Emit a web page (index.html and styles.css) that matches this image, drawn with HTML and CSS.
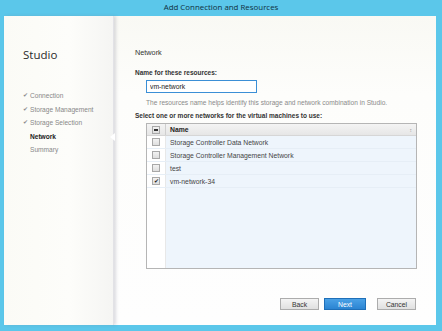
FILE: index.html
```html
<!DOCTYPE html>
<html lang="en">

<head>
    <meta charset="UTF-8">
    <title>Add Connection and Resources</title>
    <link rel="stylesheet" href="styles.css">
</head>

<body>
    <div class="window">
        <div class="titlebar">Add Connection and Resources</div>
        <div class="frame">
            <div class="sidebar">
                <h1>Studio</h1>
                <ul class="steps">
                    <li class="done">Connection</li>
                    <li class="done">Storage Management</li>
                    <li class="done">Storage Selection</li>
                    <li class="current">Network</li>
                    <li>Summary</li>
                </ul>
            </div>
            <div class="main">
                <h2>Network</h2>
                <label class="label" for="resName">Name for these resources:</label>
                <input type="text" id="resName" class="name-input" value="vm-network">
                <p class="hint">The resources name helps identify this storage and network combination in Studio.</p>
                <p class="label">Select one or more networks for the virtual machines to use:</p>
                <div class="grid">
                    <div class="row head">
                        <div class="cell-check"><span class="box partial"></span></div>
                        <div class="cell-name">Name <span class="sort">&#8597;</span></div>
                    </div>
                    <div class="row">
                        <div class="cell-check"><span class="box"></span></div>
                        <div class="cell-name">Storage Controller Data Network</div>
                    </div>
                    <div class="row">
                        <div class="cell-check"><span class="box"></span></div>
                        <div class="cell-name">Storage Controller Management Network</div>
                    </div>
                    <div class="row">
                        <div class="cell-check"><span class="box"></span></div>
                        <div class="cell-name">test</div>
                    </div>
                    <div class="row">
                        <div class="cell-check"><span class="box checked">&#10004;</span></div>
                        <div class="cell-name">vm-network-34</div>
                    </div>
                    <div class="row filler">
                        <div class="cell-check"></div>
                        <div class="cell-name"></div>
                    </div>
                </div>
                <div class="buttons">
                    <button type="button" class="btn">Back</button>
                    <button type="button" class="btn primary">Next</button>
                    <button type="button" class="btn cancel">Cancel</button>
                </div>
            </div>
        </div>
    </div>
</body>

</html>
```

FILE: styles.css
```css
body {
    margin: 0;
    background-color: #5bc7ea;
    font-family: "Liberation Sans", Arial, sans-serif;
    color: #333;
}

.window {
    width: 442px;
    height: 331px;
    display: flex;
    flex-direction: column;
}

.titlebar {
    height: 16px;
    line-height: 15px;
    text-align: center;
    font-family: "Open Sans", sans-serif;
    font-size: 7.9px;
    color: #10303e;
}

.frame {
    flex: 1;
    display: flex;
    margin: 0 6px 6px 4px;
    background-color: #fdfdfb;
}

.sidebar {
    width: 109px;
    background: linear-gradient(to right, #fbfbf6, #fdfdfa 60%, #f5f5f3);
    border-right: 1px solid #e2e2e6;
    box-shadow: 2px 0 3px rgba(120, 120, 140, 0.25);
    position: relative;
}

.sidebar h1 {
    margin: 31px 0 0 19px;
    font-family: "Open Sans", sans-serif;
    font-size: 11.5px;
    font-weight: normal;
    color: #2a2a2a;
    line-height: 16px;
}

.steps {
    list-style: none;
    margin: 26px 0 0 19px;
    padding: 0;
    font-size: 6.6px;
    color: #888;
}

.steps li {
    height: 13.5px;
    line-height: 13.5px;
    padding-left: 7px;
    position: relative;
}

.steps li.done::before {
    content: "\2714";
    position: absolute;
    left: 0;
    font-size: 6px;
    color: #8a8a8a;
}

.steps li.current {
    font-weight: bold;
    color: #222;
}

.steps li.current::after {
    content: "";
    position: absolute;
    right: -2px;
    top: 3px;
    border-style: solid;
    border-width: 4px 5px 4px 0;
    border-color: transparent #fff transparent transparent;
}

.main {
    flex: 1;
    padding: 31px 19px 0 21px;
    font-size: 6.8px;
    background: linear-gradient(to bottom, #f9f9f4, #fdfdfb 25%, #fefefe);
}

.main h2 {
    margin: 0;
    font-size: 7.3px;
    font-weight: normal;
    line-height: 12px;
    color: #333;
}

.label {
    display: block;
    margin: 0;
    font-size: 6.5px;
    font-weight: bold;
    color: #333;
    line-height: 12px;
}

label.label {
    margin-top: 8px;
}

.name-input {
    display: block;
    box-sizing: border-box;
    width: 111px;
    height: 13px;
    margin: 1px 0 0 11px;
    padding: 0 3px;
    border: 1px solid #3b8fd6;
    font-family: inherit;
    font-size: 6.8px;
    color: #222;
    outline: none;
    background-color: #fff;
}

.hint {
    margin: 4px 0 1px 11px;
    font-size: 6.6px;
    line-height: 12px;
    color: #8a8a8a;
}

.grid {
    box-sizing: border-box;
    margin: 1px 0 0 11px;
    height: 146px;
    border: 1px solid #b5b5b5;
    display: flex;
    flex-direction: column;
    background-color: #fff;
}

.row {
    display: flex;
    box-sizing: border-box;
    height: 13px;
    border-bottom: 1px solid #e6eef6;
}

.row.head {
    height: 12px;
    border-bottom: 1px solid #d6d6d6;
    background: linear-gradient(#f4f4f4, #e6e6e6);
    font-weight: bold;
}

.row.filler {
    flex: 1;
    border-bottom: none;
}

.cell-check {
    width: 18px;
    display: flex;
    align-items: center;
    justify-content: center;
    border-right: 1px solid #e8e8e8;
}

.head .cell-check {
    border-right: 1px solid #cfcfcf;
}

.cell-name {
    flex: 1;
    display: flex;
    align-items: center;
    padding-left: 4px;
    background-color: #eef5fc;
    color: #444;
}

.head .cell-name {
    background: none;
    color: #222;
}

.sort {
    margin-left: auto;
    margin-right: 4px;
    font-size: 5px;
    color: #999;
}

.box {
    width: 6px;
    height: 6px;
    border: 1px solid #a8a8a8;
    background: linear-gradient(#f2f2f2, #dedede);
    font-size: 6px;
    line-height: 6px;
    text-align: center;
    color: #222;
    position: relative;
}

.box.partial::after {
    content: "";
    position: absolute;
    left: 1px;
    top: 2px;
    width: 4px;
    height: 2px;
    background-color: #333;
}

.buttons {
    display: flex;
    justify-content: flex-end;
    margin-top: 29px;
    margin-right: 1px;
}

.btn {
    box-sizing: border-box;
    width: 39px;
    height: 12px;
    padding: 0;
    margin-left: 6px;
    border: 1px solid #acacac;
    background: linear-gradient(#f4f4f4, #e0e0e0);
    font-family: inherit;
    font-size: 6.8px;
    color: #333;
}

.btn.primary {
    width: 42px;
    margin-left: 5px;
    border-color: #1f6fb8;
    background: linear-gradient(#4aa1e6, #2b84d2);
    color: #fff;
}

.btn.cancel {
    margin-left: 11px;
}
```
